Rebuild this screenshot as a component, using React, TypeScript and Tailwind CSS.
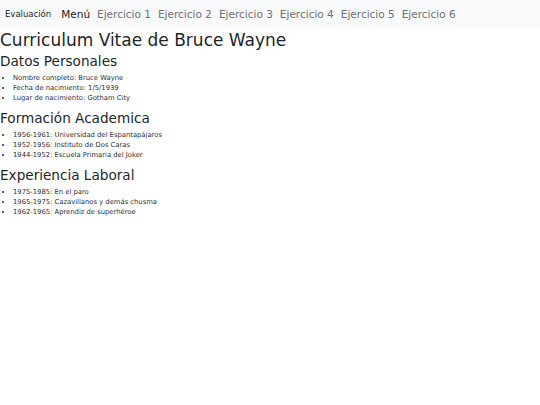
import React from 'react';

const sections = [
  {
    title: 'Datos Personales',
    items: ['Nombre completo: Bruce Wayne', 'Fecha de nacimiento: 1/5/1939', 'Lugar de nacimiento: Gotham City'],
  },
  {
    title: 'Formación Academica',
    items: [
      '1956-1961: Universidad del Espantapájaros',
      '1952-1956: Instituto de Dos Caras',
      '1944-1952: Escuela Primaria del Joker',
    ],
  },
  {
    title: 'Experiencia Laboral',
    items: ['1975-1985: En el paro', '1965-1975: Cazavillanos y demás chusma', '1962-1965: Aprendiz de superhéroe'],
  },
];

export default function App() {
  return (
    <div className="min-h-[405px] bg-white text-[#212529]" style={{ fontFamily: '"DejaVu Sans", sans-serif' }}>
      {/* Navbar */}
      <nav className="flex h-[29px] items-center whitespace-nowrap bg-[#f8f9fa] pl-[5px]">
        <span className="mr-[10px] text-[8.5px]">Evaluación</span>
        <div className="flex gap-[7px] text-[10.5px]">
          <span className="text-[#212529]">Menú</span>
          {[1, 2, 3, 4, 5, 6].map((n) => (
            <span key={n} className="text-[#707172]">Ejercicio {n}</span>
          ))}
        </div>
      </nav>

      <h1 className="mt-[1px] mb-[3px] text-[17px] leading-[1.2]">Curriculum Vitae de Bruce Wayne</h1>

      {sections.map((s) => (
        <div key={s.title}>
          <h2 className="mb-[3px] text-[13.6px] leading-[1.2]">{s.title}</h2>
          <ul className="mb-[7px] list-disc pl-[13px] text-[6.8px] leading-[10.2px] text-[#2b2f33]">
            {s.items.map((i) => (
              <li key={i}>{i}</li>
            ))}
          </ul>
        </div>
      ))}
    </div>
  );
}
